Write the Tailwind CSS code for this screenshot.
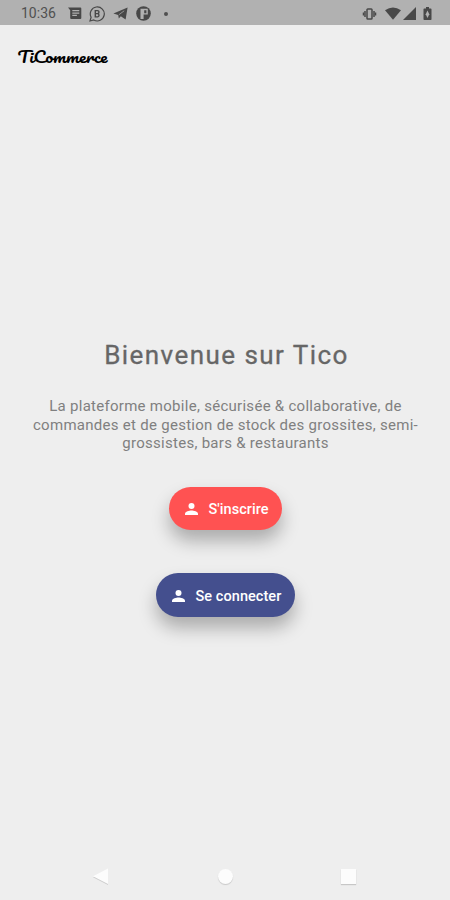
<!DOCTYPE html>
<html lang="fr">
<head>
    <meta charset="UTF-8">
    <meta name="viewport" content="width=device-width, initial-scale=1.0">
    <title>TiCommerce</title>
    <script src="https://cdn.jsdelivr.net/npm/@tailwindcss/browser@4"></script>
</head>
<body class="bg-[#eeeeee] font-['Roboto',sans-serif] antialiased">
    <div class="flex h-[900px] w-[450px] flex-col overflow-hidden">

        <!-- Status bar -->
        <header class="flex h-[25px] shrink-0 items-center bg-[#b1b1b1] pr-[17px] pl-[21px] text-[#484848]">
            <span class="w-[47px] pt-px text-[14px] leading-none whitespace-nowrap text-[#505050]">10:36</span>
            <!-- Message -->
            <svg class="mt-0.5 h-[13px] w-[14px]" viewBox="0 0 14 13" fill="currentColor">
                <path fill-rule="evenodd" d="M0 .5h12.3q1 0 1 1v9.5q0 1-1 1H3.2q-1 0-1-1V3.2ZM4.3 3v1.3h7V3Zm0 2.4v1.3h7V5.4Zm0 2.4V9h4.6V7.8Z"/>
            </svg>
            <!-- WhatsApp Business -->
            <svg class="mt-0.5 ml-[7px] h-4 w-4" viewBox="0 0 16 16" fill="none" stroke="currentColor">
                <path stroke-width="1.2" d="M1 15l1.1-3.8A7 7 0 1 1 4.8 14Z"/>
                <path stroke-width="1.4" d="M6.3 4.6h2.2a1.5 1.5 0 0 1 0 3H6.3h2.4a1.7 1.7 0 0 1 0 3.3H6.3Z"/>
            </svg>
            <!-- Telegram -->
            <svg class="mt-0.5 ml-2 h-[13px] w-[15px]" viewBox="0 0 15 13" fill="currentColor">
                <path d="M14.6.4 12.6 12.4 7.8 9.2 5.8 11.4 5.2 7.9.4 6.4Z"/>
                <path d="M5.8 7.8 11.2 3.8" fill="none" stroke="#b1b1b1" stroke-width=".7"/>
            </svg>
            <!-- Round app icon -->
            <svg class="mt-0.5 ml-2 h-[15px] w-[15px]" viewBox="0 0 15 15" fill="currentColor">
                <circle cx="7.5" cy="7.5" r="7.3"/>
                <path fill="#b1b1b1" fill-rule="evenodd" d="M4.5 2.8h7.3v5.7H7.6V13H4.5ZM8.2 4.2v3h2.2v-3Z"/>
            </svg>
            <span class="mt-0.5 ml-[13px] h-1 w-1 rounded-full bg-[#505050]"></span>

            <!-- Vibrate -->
            <svg class="mt-0.5 ml-auto h-3 w-[15px]" viewBox="0 0 15 12" fill="none" stroke="currentColor">
                <rect x="5" y="1" width="5" height="10" rx=".8" stroke-width="1.5"/>
                <path stroke-width="1.5" d="M3 3v6M12 3v6"/>
                <path stroke-width="1.5" d="M1.5 4.6v2.8M13.5 4.6v2.8"/>
            </svg>
            <!-- Wifi -->
            <svg class="mt-0.5 ml-2 h-[13px] w-4" viewBox="0 0 16 13" fill="currentColor">
                <path d="M0 3.2Q8-2.3 16 3.2L8 12.8Z"/>
            </svg>
            <!-- Signal -->
            <svg class="mt-0.5 ml-0.5 h-[13px] w-[13px]" viewBox="0 0 13 13" fill="currentColor">
                <path d="M13 0v13H0Z"/>
            </svg>
            <!-- Battery -->
            <svg class="mt-0.5 mr-px ml-[7px] h-[13px] w-[9px]" viewBox="0 0 9 13" fill="currentColor">
                <path d="M3 0h3v1.4h1.7q.8 0 .8.8v10q0 .8-.8.8H1.3q-.8 0-.8-.8v-10q0-.8.8-.8H3Z"/>
                <path fill="#b1b1b1" d="M4.5 3.4 6.3 7.2 4.5 11 2.7 7.2Z"/>
            </svg>
        </header>

        <!-- Logo -->
        <div class="h-[318px] shrink-0 pt-[11px] pl-[17px]">
            <svg class="h-10 w-[110px] overflow-visible" viewBox="0 0 110 40">
                <text x="0.5" y="26.5" textLength="90" lengthAdjust="spacingAndGlyphs" class="fill-black font-['Pacifico','Liberation_Serif',cursive] text-[15px]">TiCommerce</text>
            </svg>
        </div>

        <!-- Welcome -->
        <main class="flex flex-1 flex-col items-center">
            <h1 class="pl-[3px] text-[26px] leading-[25px] font-normal tracking-[1.45px] whitespace-nowrap text-[#666666] [-webkit-text-stroke:0.3px_#666666]">Bienvenue sur Tico</h1>
            <p class="mt-[29px] pl-px text-center text-[15px] leading-[18.7px] tracking-[0.28px] whitespace-nowrap text-[#808080]">
                La plateforme mobile, sécurisée &amp; collaborative, de<br>
                commandes et de gestion de stock des grossites, semi-<br>
                grossistes, bars &amp; restaurants
            </p>

            <button class="mt-[34px] flex h-[43px] w-[113px] items-center rounded-full bg-[#ff5252] pl-4 text-[14.5px] font-medium whitespace-nowrap text-white shadow-[0_11px_18px_rgba(0,0,0,0.28)]">
                <svg class="h-3 w-[13px]" viewBox="0 0 13 12" fill="currentColor">
                    <circle cx="6.5" cy="3" r="3"/>
                    <path d="M0 12v-1.5C0 8.5 4.4 7.4 6.5 7.4s6.500 1.100 6.500 3.100V12Z"/>
                </svg>
                <span class="ml-[11px] pt-0.5 tracking-[0.06px]">S'inscrire</span>
            </button>

            <button class="mt-[43px] flex h-11 w-[139px] items-center rounded-full bg-[#444f8e] pl-4 text-[14.5px] font-medium whitespace-nowrap text-white shadow-[0_11px_18px_rgba(0,0,0,0.28)]">
                <svg class="mt-px h-3 w-[13px]" viewBox="0 0 13 12" fill="currentColor">
                    <circle cx="6.5" cy="3" r="3"/>
                    <path d="M0 12v-1.5C0 8.5 4.4 7.4 6.5 7.4s6.500 1.100 6.500 3.100V12Z"/>
                </svg>
                <span class="ml-[11px] pt-[3px] tracking-[0.06px]">Se connecter</span>
            </button>
        </main>

        <!-- Navigation bar -->
        <nav class="flex h-12 shrink-0 items-center justify-between pr-[94px] pl-[93px] text-[#fcfcfc]">
            <svg class="h-[17px] w-4 drop-shadow-[0_1px_0.5px_rgba(0,0,0,0.14)]" viewBox="0 0 16 17" fill="currentColor">
                <path d="M15 .5V16L0 8.3Z"/>
            </svg>
            <span class="h-[15px] w-[15px] rounded-full bg-[#fcfcfc] shadow-[0_1px_1px_rgba(0,0,0,0.16)]"></span>
            <span class="h-[15px] w-[15px] bg-[#fcfcfc] shadow-[0_1px_1px_rgba(0,0,0,0.16)]"></span>
        </nav>
    </div>
</body>
</html>
